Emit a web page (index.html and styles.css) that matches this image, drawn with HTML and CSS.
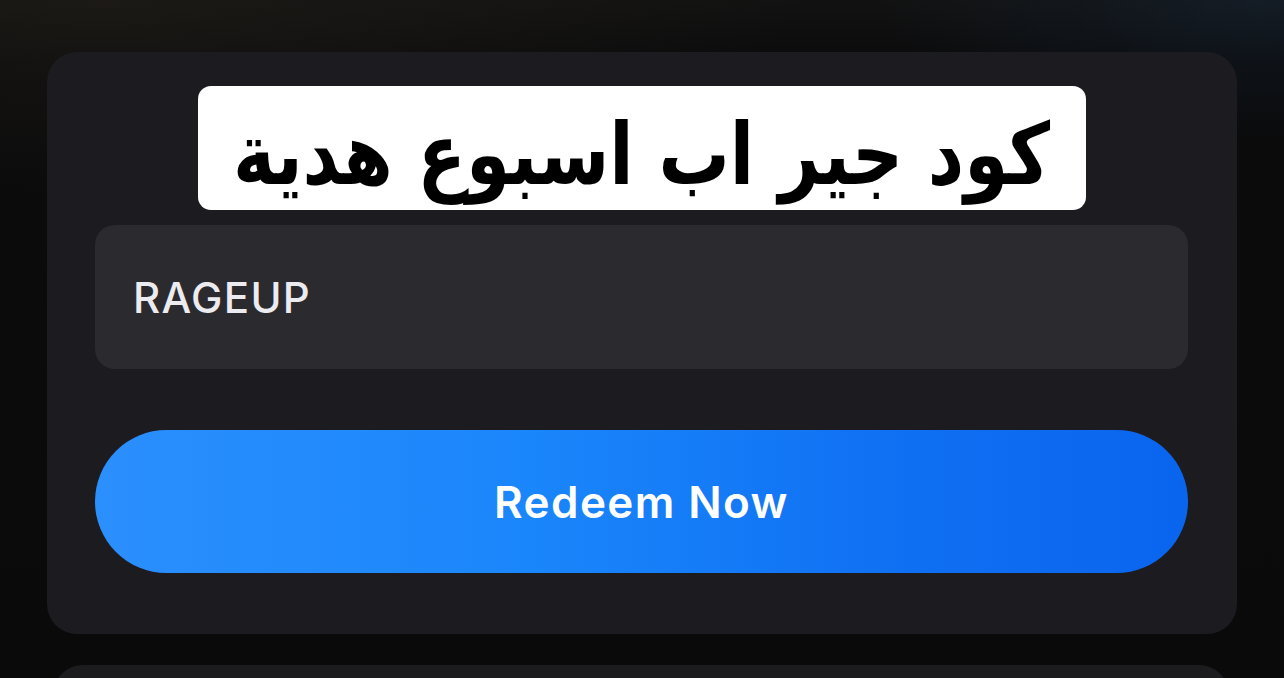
FILE: index.html
```html
<!DOCTYPE html>
<html lang="en">
<head>
<meta charset="utf-8">
<title>Redeem</title>
<link rel="stylesheet" href="styles.css">
</head>
<body>
<main class="page">
  <section class="card">
    <div class="label"><span class="label-text" dir="rtl" lang="ar">كود جير اب اسبوع هدية</span></div>
    <div class="field"><span class="field-text">RAGEUP</span></div>
    <button class="redeem" type="button">Redeem Now</button>
  </section>
  <section class="card card-next"></section>
</main>
</body>
</html>
```
FILE: styles.css
```css
html, body {
  margin: 0;
  height: 100%;
}
body {
  background:
    radial-gradient(ellipse 380px 140px at 1260px 0px, rgba(22, 40, 60, 0.45), rgba(22, 40, 60, 0) 100%),
    radial-gradient(ellipse 700px 200px at 100px 0px, rgba(34, 30, 24, 0.6), rgba(34, 30, 24, 0) 100%),
    linear-gradient(180deg, #121212 0px, #0b0b0c 60px, #0a0a0a 100%);
  overflow: hidden;
  font-family: Inter, "Noto Sans", sans-serif;
}
.page {
  padding: 52px 47px 0 47px;
  display: flex;
  flex-direction: column;
  gap: 31px;
}
.card {
  background: #1c1b1f;
  border-radius: 30px;
  padding: 34px 49px 61px 48px;
  display: flex;
  flex-direction: column;
  align-items: stretch;
}
.label {
  align-self: center;
  width: 888px;
  height: 124px;
  background: #ffffff;
  border-radius: 13px;
  display: flex;
  align-items: center;
  justify-content: center;
  margin-bottom: 15px;
}
.label-text {
  font-family: "DejaVu Sans", "Noto Sans", sans-serif;
  font-weight: 700;
  font-size: 71px;
  line-height: 1;
  color: #000;
  white-space: nowrap;
  display: inline-block;
  transform: translateY(6px) scaleY(1.2);
}
.field {
  height: 144px;
  background: #2b2a2f;
  border-radius: 20px;
  display: flex;
  align-items: center;
  padding-left: 38px;
  margin-bottom: 61px;
}
.field-text {
  font-size: 42px;
  font-weight: 500;
  color: #ebebf0;
  letter-spacing: 1.3px;
}
.redeem {
  height: 143px;
  border: none;
  border-radius: 72px;
  background: linear-gradient(90deg, #2b8ffd 0%, #1a86fb 40%, #0f6ff2 75%, #0a65ee 100%);
  color: #ffffff;
  font-family: Inter, "Noto Sans", sans-serif;
  font-size: 44px;
  font-weight: 600;
  letter-spacing: 1.4px;
  padding: 0;
  cursor: pointer;
}
.card-next {
  margin: 0 8px 0 6px;
  height: 120px;
  padding: 0;
  background: #1c1c1f;
}
```
